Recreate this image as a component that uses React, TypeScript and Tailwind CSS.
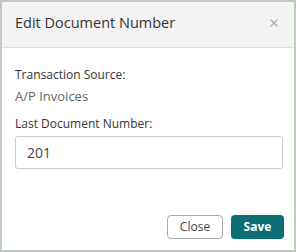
import { X } from "lucide-react";

const App = () => {
  return (
    <div className="w-[296px] h-[252px] bg-[#c3c9c3] p-[2px] font-['Open_Sans',sans-serif]">
      <div className="bg-white h-full flex flex-col">
        <div className="h-[46px] bg-[#f3f3f3] border-b border-[#dedede] px-[13px] flex items-center justify-between">
          <h3 className="text-[14.5px] text-[#333] leading-none -mt-[3px]">Edit Document Number</h3>
          <X size={12} strokeWidth={3} className="text-[#b3b3b3] mr-[1px] -mt-[3px]" />
        </div>
        <div className="px-[13px] pt-[18px]">
          <p className="text-[12px] text-[#333] leading-[18px]">Transaction Source:</p>
          <p className="text-[13px] text-[#666] leading-[18px] mt-[3px]">A/P Invoices</p>
          <p className="text-[12px] text-[#333] leading-[18px] mt-[10px]">Last Document Number:</p>
          <div className="mt-[3px] h-[33px] w-[268px] border border-[#ccc] rounded-[3px] flex items-center px-[11px]">
            <span className="text-[14px] text-[#444]">201</span>
          </div>
        </div>
        <div className="mt-auto flex justify-end gap-[8px] px-[10px] pb-[11px]">
          <button className="w-[56px] h-[24px] border border-[#aaa] rounded-[4px] text-[12px] text-[#444] bg-white">
            Close
          </button>
          <button className="w-[53px] h-[24px] rounded-[4px] text-[12px] font-bold text-white bg-[#0b6e75]">
            Save
          </button>
        </div>
      </div>
    </div>
  );
};
export default App;
